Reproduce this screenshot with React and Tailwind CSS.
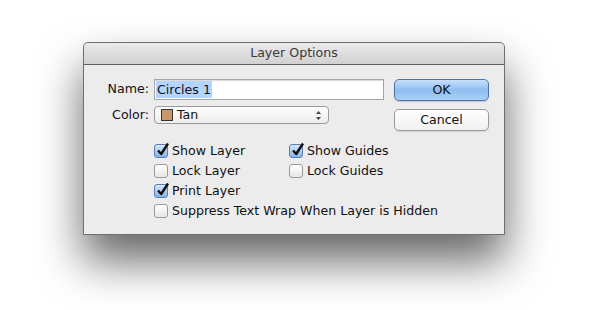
import React from "react";

function Check({ checked, label }) {
  return (
    <label className="flex items-center h-[20px] gap-[4px] whitespace-nowrap">
      <span
        className={`relative w-[14px] h-[14px] rounded-[3px] border ${
          checked
            ? "border-[#5a7fb0] bg-gradient-to-b from-[#d8e8f8] to-[#87b4e6]"
            : "border-[#9a9a9a] bg-gradient-to-b from-[#ffffff] to-[#e6e6e6]"
        }`}
      >
        {checked && (
          <svg className="absolute left-[1px] top-[-3px]" width="14" height="15" viewBox="0 0 14 15">
            <path d="M2 8.5 L5.2 12 L12 1.5" fill="none" stroke="#111" strokeWidth="2.4" strokeLinejoin="round" />
          </svg>
        )}
      </span>
      <span>{label}</span>
    </label>
  );
}

export default function App() {
  return (
    <div
      className="w-[600px] h-[310px] bg-white pt-[42px] pl-[83px] text-[12.6px] text-[#111]"
      style={{ fontFamily: '"DejaVu Sans", sans-serif' }}
    >
      <div className="w-[422px] h-[193px] bg-[#ececec] border border-[#6f6f6f] rounded-t-[5px] shadow-[0_26px_45px_rgba(0,0,0,0.6)] flex flex-col">
        <div className="h-[22px] rounded-t-[5px] bg-gradient-to-b from-[#ebebeb] to-[#d1d1d1] border-b border-[#5e5e5e] flex items-center justify-center text-[#3a3a3a]">
          Layer Options
        </div>
        <div className="flex pt-[14px]">
          <div className="flex flex-col">
            <div className="flex items-center h-[21px]">
              <span className="w-[65px] text-right">Name:</span>
              <div className="ml-[5px] w-[230px] h-[21px] bg-white border border-[#a5a5a5] shadow-[inset_0_1px_1px_rgba(0,0,0,0.15)] flex items-center px-[1px]">
                <span className="bg-[#b4d5fe] px-[1px] leading-[17px]">Circles 1</span>
              </div>
            </div>
            <div className="flex items-center h-[18px] mt-[6px]">
              <span className="w-[65px] text-right">Color:</span>
              <div className="ml-[5px] w-[175px] h-[18px] rounded-[4px] border border-[#9a9a9a] bg-gradient-to-b from-[#ffffff] to-[#ececec] flex items-center pl-[6px] pr-[6px]">
                <span className="w-[12px] h-[12px] bg-[#c9976a] border border-[#333]" />
                <span className="ml-[4px]">Tan</span>
                <svg className="ml-auto" width="7" height="11" viewBox="0 0 7 11">
                  <path d="M3.5 1 L6 4 L1 4 Z M3.5 10 L6 7 L1 7 Z" fill="#444" />
                </svg>
              </div>
            </div>
          </div>
          <div className="ml-auto mr-[15px] flex flex-col gap-[8px]">
            <button className="w-[95px] h-[22px] rounded-[5px] border border-[#4f72a8] bg-gradient-to-b from-[#c8e0fa] via-[#8fbdf0] to-[#a9d0f7] shadow-[0_1px_1px_rgba(0,0,0,0.15)]">
              OK
            </button>
            <button className="w-[95px] h-[22px] rounded-[5px] border border-[#9a9a9a] bg-gradient-to-b from-[#ffffff] to-[#f0f0f0] shadow-[0_1px_1px_rgba(0,0,0,0.1)]">
              Cancel
            </button>
          </div>
        </div>
        <div className="ml-[70px] mt-[10px] grid grid-cols-[135px_auto]">
          <Check checked label="Show Layer" />
          <Check checked label="Show Guides" />
          <Check label="Lock Layer" />
          <Check label="Lock Guides" />
          <Check checked label="Print Layer" />
          <span />
          <div className="col-span-2">
            <Check label="Suppress Text Wrap When Layer is Hidden" />
          </div>
        </div>
      </div>
    </div>
  );
}
